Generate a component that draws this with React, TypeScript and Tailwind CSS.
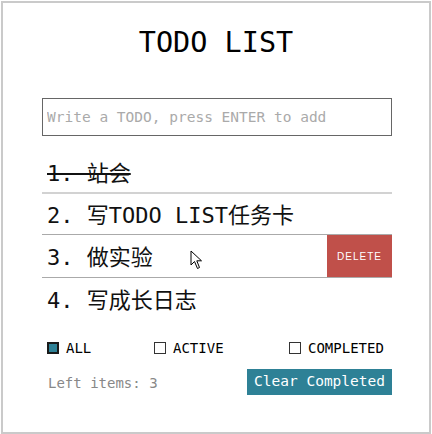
import { FC, useState } from 'react';

interface Todo {
  id: number;
  text: string;
  done: boolean;
}

const mono = "font-['DejaVu_Sans_Mono','Noto_Sans_CJK_SC',monospace]";

const initialTodos: Todo[] = [
  { id: 1, text: '站会', done: true },
  { id: 2, text: '写TODO LIST任务卡', done: false },
  { id: 3, text: '做实验', done: false },
  { id: 4, text: '写成长日志', done: false },
];

const Cursor: FC = () => (
  <svg className="absolute left-[148px] top-[15px]" width="14" height="20" viewBox="0 0 14 20">
    <path d="M1 1 L1 15 L4.5 11.5 L7.5 18.5 L9.5 17.5 L6.8 10.8 L11.5 10.8 Z" fill="#fff" stroke="#000" strokeWidth="1" strokeLinejoin="round" />
  </svg>
);

const App: FC = () => {
  const [todos, setTodos] = useState<Todo[]>(initialTodos);
  const [filter, setFilter] = useState<'all' | 'active' | 'completed'>('all');
  const [text, setText] = useState('');
  const hovered = 3;

  const left = todos.filter((t) => !t.done).length;

  const filters: { key: 'all' | 'active' | 'completed'; label: string }[] = [
    { key: 'all', label: 'ALL' },
    { key: 'active', label: 'ACTIVE' },
    { key: 'completed', label: 'COMPLETED' },
  ];

  return (
    <div className={`m-px w-[430px] h-[433px] border-2 border-[#cacaca] bg-white ${mono}`}>
      {/* Header */}
      <h1 className="pt-[20px] text-center text-[28.5px] leading-[40px] text-black">TODO LIST</h1>

      <div className="ml-[39px] w-[350px]">
        {/* Input */}
        <input
          value={text}
          onChange={(e) => setText(e.target.value)}
          onKeyDown={(e) => {
            if (e.key === 'Enter' && text.trim()) {
              setTodos([...todos, { id: Date.now(), text, done: false }]);
              setText('');
            }
          }}
          placeholder="Write a TODO, press ENTER to add"
          className="mt-[35px] w-full h-[38px] border border-[#666] px-[4px] text-[14.5px] text-black placeholder:text-[#aaa] outline-none"
        />

        {/* List */}
        <ul className="mt-[16px]">
          {todos.map((todo, i) => (
            <li
              key={todo.id}
              className={`relative flex items-center ${
                i === 0
                  ? 'h-[42px] border-b-2 border-[#d2d2d2]'
                  : todo.id === hovered
                  ? 'h-[43px] border-b border-[#aaa]'
                  : i === 1
                  ? 'h-[41px] border-b border-[#aaa]'
                  : 'h-[42px]'
              }`}
            >
              <span
                onClick={() => setTodos(todos.map((t) => (t.id === todo.id ? { ...t, done: !t.done } : t)))}
                className={`pl-[5px] pt-[2px] text-[22px] text-[#111] whitespace-pre cursor-pointer ${todo.done ? 'line-through' : ''}`}
              >
                {`${i + 1}. ${todo.text}`}
              </span>
              {todo.id === hovered && (
                <>
                  <Cursor />
                  <button
                    onClick={() => setTodos(todos.filter((t) => t.id !== todo.id))}
                    className="ml-auto h-full w-[65px] bg-[#c0504a] text-white text-[10px] tracking-[1px] font-['Liberation_Sans',sans-serif]"
                  >
                    DELETE
                  </button>
                </>
              )}
            </li>
          ))}
        </ul>

        {/* Filters */}
        <div className="mt-[19px] flex items-center text-[14px] text-black">
          {filters.map((f, i) => (
            <label
              key={f.key}
              className={`flex items-center cursor-pointer ${i === 0 ? 'ml-[5px] w-[107px]' : i === 1 ? 'w-[135px]' : ''}`}
              onClick={() => setFilter(f.key)}
            >
              <span
                className={`w-[12px] h-[12px] border ${
                  filter === f.key ? 'border-2 border-[#1a1a1a] bg-[#2e8196]' : 'border-[#333] bg-white'
                }`}
              />
              <span className="ml-[7px] leading-[18px]">{f.label}</span>
            </label>
          ))}
        </div>

        {/* Footer */}
        <div className="mt-[12px] flex items-center justify-between">
          <span className="pl-[6px] pt-[3px] text-[14px] text-[#888]">Left items: {left}</span>
          <button
            onClick={() => setTodos(todos.filter((t) => !t.done))}
            className="h-[26px] px-[7px] bg-[#2e8196] text-white text-[14.5px]"
          >
            Clear Completed
          </button>
        </div>
      </div>
    </div>
  );
};

export default App;
